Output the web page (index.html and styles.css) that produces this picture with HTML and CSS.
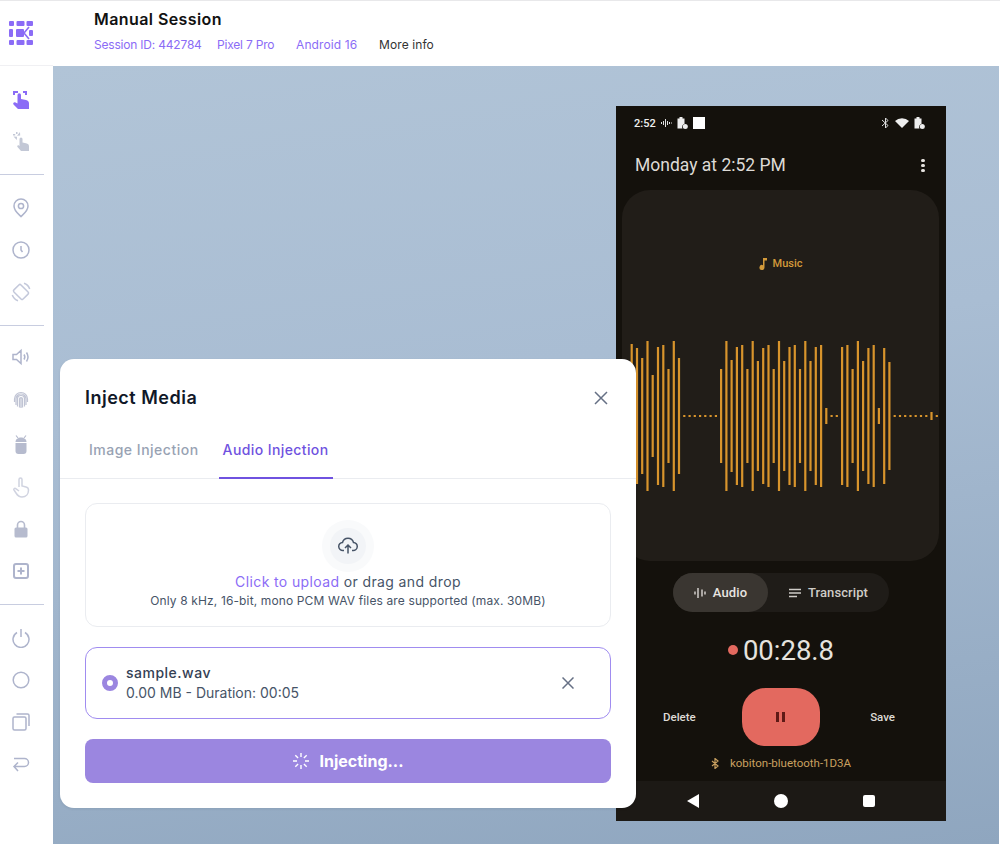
FILE: index.html
```html
<!DOCTYPE html>
<html lang="en">
<head>
    <meta charset="UTF-8">
    <meta name="viewport" content="width=device-width, initial-scale=1.0">
    <title>Manual Session</title>
    <link rel="stylesheet" href="styles.css">
</head>
<body>

    <div class="app">

        <!-- left tool rail -->
        <aside class="rail">
            <div class="rail-logo">
                <svg width="24" height="24" viewBox="0 0 24 24" fill="#8b6cf6">
                    <rect x="0" y="0" width="5" height="5" rx="1"/>
                    <rect x="7.5" y="0" width="8" height="5" rx="1"/>
                    <rect x="17.5" y="0" width="6.5" height="5" rx="1"/>
                    <rect x="0" y="8" width="4" height="8" rx="1"/>
                    <rect x="7" y="8" width="8" height="8" rx="1"/>
                    <path d="M15 12l5-6M15 12l5 6" stroke="#8b6cf6" stroke-width="1.6" fill="none"/>
                    <rect x="20" y="9" width="4" height="6" rx="1"/>
                    <rect x="0" y="19" width="5" height="5" rx="1"/>
                    <rect x="7.5" y="19" width="8" height="5" rx="1"/>
                    <rect x="17.5" y="19" width="6.5" height="5" rx="1"/>
                </svg>
            </div>

            <div class="rail-group">
                <div class="rail-btn">
                    <svg width="20" height="20" viewBox="0 0 20 20" fill="#8b6cf6">
                        <path d="M2 2h5v2H4v2H2zM12 2h4v4h-2V4h-2z"/>
                        <path d="M6.500 6a1.750 1.750 0 0 1 3.500 0v4l5 1c2 .5 3 1.500 3 3.500V20H7l-4.500-4.500c-1-1 .5-2.800 2-2l2 1z"/>
                    </svg>
                </div>
                <div class="rail-btn">
                    <svg width="20" height="20" viewBox="0 0 20 20" fill="#c3c8d6">
                        <path d="M2.500 5.500l3.500.2-.2 3.300zM9 1l.2 3.500-3.200.2z"/>
                        <path d="M2 3h2.200v1.500H2zM5 1h1.500v2H5z"/>
                        <path d="M8.500 8a1.500 1.500 0 0 1 3 0v3.500l3.500.7c2 .4 3 1.300 3 3.300V20H10l-3.500-4c-.8-1 .4-2.200 1.400-1.500l.6.4z"/>
                    </svg>
                </div>
            </div>

            <div class="rail-group">
                <div class="rail-btn">
                    <svg width="20" height="20" viewBox="0 0 20 20" class="rail-line">
                        <path d="M10 18.500c-1-1.300-7-5-7-10.500a7 7 0 0 1 14 0c0 5.500-6 9.200-7 10.500z"/>
                        <circle cx="10" cy="8" r="2.600"/>
                    </svg>
                </div>
                <div class="rail-btn">
                    <svg width="20" height="20" viewBox="0 0 20 20" class="rail-line">
                        <circle cx="10" cy="10" r="8"/>
                        <path d="M10 6v4l1.500 2"/>
                    </svg>
                </div>
                <div class="rail-btn">
                    <svg width="20" height="20" viewBox="0 0 20 20" class="rail-soft">
                        <rect x="5" y="3.500" width="10" height="13" rx="1.500" transform="rotate(-45 10 10)"/>
                        <path d="M13 1.300A9.200 9.200 0 0 1 18.700 7M7 18.700A9.200 9.200 0 0 1 1.300 13"/>
                    </svg>
                </div>
            </div>

            <div class="rail-group rail-group-mid">
                <div class="rail-btn">
                    <svg width="20" height="20" viewBox="0 0 20 20" class="rail-line">
                        <path d="M2 7.500h3.500L10 3.500v13l-4.500-4H2zM13 7.500c1 1.500 1 3.500 0 5M15.500 5.500c2 3 2 6 0 9"/>
                    </svg>
                </div>
                <div class="rail-btn">
                    <svg width="20" height="20" viewBox="0 0 20 20" class="rail-print">
                        <path d="M3.500 13v-3a6.500 6.500 0 0 1 13 0v3M5 16v-6a5 5 0 0 1 10 0v6M6.500 17.500V10a3.500 3.500 0 0 1 7 0v7.500M8.500 18.500V10a1.500 1.500 0 0 1 3 0v8.500M10 9v10"/>
                    </svg>
                </div>
                <div class="rail-btn rail-btn-android">
                    <svg width="20" height="22" viewBox="0 0 20 22" fill="#b6bbce">
                        <path d="M5 1.500l2 2.500M15 1.500L13 4" stroke="#b6bbce" stroke-width="1.200"/>
                        <path d="M4.500 8c0-6 11-6 11 0z"/>
                        <path d="M4.500 9h11v8c0 2-1 3-3 3h-5c-2 0-3-1-3-3z"/>
                    </svg>
                </div>
                <div class="rail-btn">
                    <svg width="20" height="22" viewBox="0 0 20 22" class="rail-faint">
                        <path d="M8 11V3.500c0-2 3-2 3 0V10l4 1c1.500.4 2.500 1 2.500 3 0 4-2.500 7-6.500 7-3 0-4.500-1.500-6-4l-2-3c-.8-1.200.8-2.400 1.800-1.400L8 15"/>
                    </svg>
                </div>
                <div class="rail-btn">
                    <svg width="20" height="20" viewBox="0 0 20 20" fill="#b6bbce">
                        <path d="M6.500 9V6a3.500 3.500 0 0 1 7 0v3" fill="none" stroke="#b6bbce" stroke-width="1.600"/>
                        <rect x="3.500" y="8.500" width="13" height="10" rx="1.500"/>
                    </svg>
                </div>
                <div class="rail-btn">
                    <svg width="20" height="20" viewBox="0 0 20 20" class="rail-line rail-thick">
                        <rect x="3" y="3" width="14" height="14" rx="2"/>
                        <path d="M10 6.500v7M6.500 10h7"/>
                    </svg>
                </div>
            </div>

            <div class="rail-group rail-group-last">
                <div class="rail-btn">
                    <svg width="20" height="20" viewBox="0 0 20 20" class="rail-line">
                        <path d="M6 4.500a8 8 0 1 0 8 0M10 1v8"/>
                    </svg>
                </div>
                <div class="rail-btn">
                    <svg width="20" height="20" viewBox="0 0 20 20" class="rail-line">
                        <circle cx="10" cy="10" r="7.800"/>
                    </svg>
                </div>
                <div class="rail-btn">
                    <svg width="20" height="20" viewBox="0 0 20 20" class="rail-line">
                        <rect x="2" y="5" width="13" height="13" rx="1.500"/>
                        <path d="M5.500 2h11a1.500 1.500 0 0 1 1.500 1.500V14"/>
                    </svg>
                </div>
                <div class="rail-btn">
                    <svg width="20" height="20" viewBox="0 0 20 20" class="rail-line">
                        <path d="M3 3h10.500a3.800 3.800 0 0 1 0 8H3M7 7l-4 4 4 4.500" transform="translate(0 1.500)"/>
                    </svg>
                </div>
            </div>
        </aside>

        <div class="main">

            <header class="topbar">
                <div class="topbar-title">Manual Session</div>
                <div class="topbar-meta">
                    <span class="meta-link meta-id">Session ID: 442784</span>
                    <span class="meta-link meta-model">Pixel 7 Pro</span>
                    <span class="meta-link meta-os">Android 16</span>
                    <span class="meta-more">More info</span>
                </div>
            </header>

            <div class="stage">

                <!-- device screen -->
                <div class="phone">
                    <div class="phone-status">
                        <div class="status-left">
                            <span>2:52</span>
                            <svg width="11" height="10" viewBox="0 0 11 10" class="status-stroke">
                                <path d="M.5 4v2M2.500 3v4M4.500 1v8M6.500 3v4M8.500 4v2M10.500 4.500v1"/>
                            </svg>
                            <svg width="11" height="12" viewBox="0 0 11 12" fill="#eee">
                                <path d="M2.500 0h3v1.500h2V7a3 3 0 0 0-2 4.500H.5v-10h2z"/>
                                <circle cx="8.300" cy="9.500" r="2.500"/>
                            </svg>
                            <span class="status-square"></span>
                        </div>
                        <div class="status-right">
                            <svg width="9" height="12" viewBox="0 0 9 12" class="status-stroke">
                                <path d="M1 3l6 5.500L4.500 11V1L7 3.500 1 9"/>
                            </svg>
                            <svg width="14" height="10" viewBox="0 0 14 10" fill="#eee">
                                <path d="M0 3a10 10 0 0 1 14 0l-7 7z"/>
                            </svg>
                            <svg width="11" height="12" viewBox="0 0 11 12" fill="#eee">
                                <path d="M2.500 0h3v1.500h2V7a3 3 0 0 0-2 4.500H.5v-10h2z"/>
                                <circle cx="8.300" cy="9.500" r="2.500"/>
                            </svg>
                        </div>
                    </div>

                    <div class="phone-head">
                        <span>Monday at 2:52 PM</span>
                        <span class="dots"><i></i><i></i><i></i></span>
                    </div>

                    <div class="wave-card">
                        <div class="wave-tag">
                            <svg width="8" height="12" viewBox="0 0 8 12" fill="#d39a3a">
                                <path d="M4 0h4v2.500H5.500v7A2.500 2.500 0 1 1 4 7.200z"/>
                            </svg>
                            <span>Music</span>
                        </div>
                        <svg class="wave" width="317" height="160" viewBox="0 0 317 160">
                            <path d="M9.700 8v144M15 12v136M20.200 22v116M25.500 5v150M30.700 39v82M36 11v138M41.300 9v142M46.500 33v94M51.800 5v150M57 22v116
                            M62.300 79v2M67.600 79v2M72.800 79v2M78.100 79v2M83.300 79v2M88.600 79v2M93.900 79v2
                            M99.100 33v94M104.400 5v150M109.600 24v112M114.900 11v138M120.200 9v142M125.400 33v94M130.700 5v150M135.900 25v110M141.200 12v136M146.500 9v142
                            M151.700 33v94M157 5v150M162.200 25v110M167.500 11v138M172.800 9v142M178 33v94M183.300 5v150M188.500 25v110M193.800 11v138M199.100 9v142
                            M204.300 72v16M209.600 79v2M214.800 79v2
                            M220.100 11v138M225.400 9v142M230.600 33v94M235.900 5v150M241.100 25v110M246.400 12v136M251.700 9v142M256.900 72v16M262.200 12v136M267.400 26v108
                            M272.700 79v2M278 79v2M283.200 79v2M288.500 79v2M293.700 79v2M299 79v2M304.300 79v2M309.500 76v8M314.800 79v2"/>
                        </svg>
                    </div>

                    <div class="segment">
                        <div class="segment-item segment-on">
                            <svg width="12" height="12" viewBox="0 0 12 12" class="seg-icon">
                                <path d="M1 4.500v3M4 1v10M8 2.500v7M11 4.500v3"/>
                            </svg>
                            <span>Audio</span>
                        </div>
                        <div class="segment-item">
                            <svg width="12" height="10" viewBox="0 0 12 10" class="seg-icon">
                                <path d="M0 1.500h12M0 5h12M0 8.500h8"/>
                            </svg>
                            <span>Transcript</span>
                        </div>
                    </div>

                    <div class="timer">
                        <span class="timer-dot"></span>
                        <span>00:28.8</span>
                    </div>

                    <div class="controls">
                        <span class="ctrl-text">Delete</span>
                        <div class="pause-btn"><i></i><i></i></div>
                        <span class="ctrl-text">Save</span>
                    </div>

                    <div class="device-row">
                        <svg width="8" height="11" viewBox="0 0 8 11" class="bt-icon">
                            <path d="M1 3l6 5-3 2.500V.500L7 3 1 8"/>
                        </svg>
                        <span>kobiton-bluetooth-1D3A</span>
                    </div>

                    <div class="phone-nav">
                        <span class="nav-back"></span>
                        <span class="nav-home"></span>
                        <span class="nav-recent"></span>
                    </div>
                </div>

                <!-- modal over the stage -->
                <div class="modal">
                    <div class="modal-head">
                        <div class="modal-title">Inject Media</div>
                        <svg width="14" height="14" viewBox="0 0 14 14" class="x-icon">
                            <path d="M1 1l12 12M13 1L1 13"/>
                        </svg>
                    </div>

                    <div class="tabs">
                        <div class="tab">Image Injection</div>
                        <div class="tab tab-active">Audio Injection</div>
                    </div>

                    <div class="modal-body">
                        <div class="upload">
                            <div class="upload-ring">
                                <div class="upload-circle">
                                    <svg width="20" height="20" viewBox="0 0 20 20" class="upload-icon">
                                        <path d="M6 14.500H5a4 4 0 0 1-.5-8 5.700 5.700 0 0 1 11 0 4 4 0 0 1-.5 8h-1M10 17.500v-8M7 12l3-3 3 3"/>
                                    </svg>
                                </div>
                            </div>
                            <div class="upload-text"><span class="upload-link">Click to upload</span> or drag and drop</div>
                            <div class="upload-note">Only 8 kHz, 16-bit, mono PCM WAV files are supported (max. 30MB)</div>
                        </div>

                        <div class="file-card">
                            <span class="radio"></span>
                            <div class="file-info">
                                <div class="file-name">sample.wav</div>
                                <div class="file-meta">0.00 MB - Duration: 00:05</div>
                            </div>
                            <svg width="12" height="12" viewBox="0 0 12 12" class="x-icon">
                                <path d="M.5.500l11 11M11.500.500l-11 11"/>
                            </svg>
                        </div>

                        <div class="inject-btn">
                            <svg width="18" height="18" viewBox="0 0 18 18" class="spinner">
                                <path d="M9 1v4M9 13v4M1 9h4M13 9h4M3.300 3.300l2.800 2.800M11.900 11.900l2.800 2.800M3.300 14.700l2.800-2.800M11.900 6.100l2.800-2.800"/>
                            </svg>
                            <span>Injecting...</span>
                        </div>
                    </div>
                </div>

            </div>
        </div>
    </div>

</body>
</html>
```

FILE: styles.css
```css
:root{
    --purple: #8b6cf6;
    --purple-deep: #6f52e0;
    --purple-soft: #9b86e0;
    --rail-ink: #aeb4cc;
    --line: #eaecf0;
}
*{
    box-sizing: border-box;
}
body{
    margin: 0;
    background: #fff;
    font-family: "Inter", sans-serif;
}
.app{
    display: flex;
    width: 1000px;
    height: 845px;
    border-top: 1px solid #e8e8ea;
    overflow: hidden;
}

/* rail */
.rail{
    width: 53px;
    flex: none;
    background: #fff;
}
.rail-logo{
    height: 65px;
    padding: 20px 0 0 9px;
    border-bottom: 1px solid #f0f0f3;
    width: 53px;
}
.rail-logo svg{
    display: block;
}
.rail-group{
    width: 44px;
    padding: 12px 0;
    border-bottom: 1px solid #c8cde0;
}
.rail-group-mid{
    padding-top: 10px;
}
.rail-group-last{
    border-bottom: 0;
}
.rail-btn{
    height: 42px;
    display: flex;
    align-items: center;
    justify-content: center;
    width: 42px;
}
.rail-btn-android{
    margin-top: 4px;
}
.rail-line{
    fill: none;
    stroke: var(--rail-ink);
    stroke-width: 1.5;
}
.rail-soft{
    fill: none;
    stroke: #c3c8da;
    stroke-width: 1.5;
}
.rail-thick{
    stroke-width: 2;
}
.rail-print{
    fill: none;
    stroke: #c0c4d4;
    stroke-width: 1.2;
}
.rail-faint{
    fill: none;
    stroke: #d0d3e0;
    stroke-width: 1.5;
}

/* top */
.main{
    flex: 1;
    display: flex;
    flex-direction: column;
    min-width: 0;
}
.topbar{
    height: 65px;
    flex: none;
    padding: 8px 0 0 41px;
    background: #fff;
}
.topbar-title{
    font-size: 16px;
    line-height: 21px;
    font-weight: 600;
    color: #111;
    letter-spacing: .42px;
}
.topbar-meta{
    display: flex;
    margin-top: 7px;
    font-size: 12px;
    line-height: 16px;
}
.meta-link{
    color: var(--purple);
}
.meta-id{
    width: 123px;
    letter-spacing: -.2px;
}
.meta-model{
    width: 79px;
    letter-spacing: -.2px;
}
.meta-os{
    width: 83px;
    letter-spacing: .1px;
}
.meta-more{
    color: #333;
    letter-spacing: .1px;
}

/* stage */
.stage{
    position: relative;
    flex: none;
    height: 778px;
    width: 946px;
    padding: 40px 53px 0 0;
    display: flex;
    justify-content: flex-end;
    align-items: flex-start;
    background: linear-gradient(172deg, #b1c4d7 0%, #a9bdd3 40%, #8fa6bf 100%);
}

/* phone */
.phone{
    width: 330px;
    height: 715px;
    background: #14110c;
    display: flex;
    flex-direction: column;
    font-family: "Roboto", sans-serif;
    color: #e6e3df;
}
.phone-status{
    height: 34px;
    padding: 0 21px 0 18px;
    display: flex;
    align-items: center;
    justify-content: space-between;
    font-size: 11px;
    font-weight: 500;
    color: #eee;
}
.status-left, .status-right{
    display: flex;
    align-items: center;
    gap: 5px;
}
.status-square{
    width: 12px;
    height: 12px;
    background: #fff;
}
.status-stroke{
    fill: none;
    stroke: #ddd;
    stroke-width: 1;
}
.phone-head{
    height: 50px;
    padding: 0 21px 0 19px;
    display: flex;
    align-items: center;
    justify-content: space-between;
    font-size: 17.5px;
    color: #dedbd6;
}
.dots{
    display: flex;
    flex-direction: column;
    gap: 2px;
}
.dots i{
    width: 4px;
    height: 3px;
    border-radius: 2px;
    background: #e6e3df;
}
.wave-card{
    margin: 0 7px 0 6px;
    height: 371px;
    flex: none;
    border-radius: 28px;
    background: #211d18;
    padding-top: 66px;
}
.wave-tag{
    display: flex;
    align-items: center;
    justify-content: center;
    gap: 6px;
    font-size: 11px;
    line-height: 16px;
    font-weight: 500;
    color: #d39a3a;
}
.wave{
    display: block;
    margin-top: 64px;
    fill: none;
    stroke: #d8942c;
    stroke-width: 2.2;
}
.segment{
    display: flex;
    width: 216px;
    height: 39px;
    margin: 12px auto 0;
    border-radius: 20px;
    background: #1f1c18;
    font-size: 13px;
    font-weight: 500;
    letter-spacing: .1px;
    color: #cfccc7;
}
.segment-item{
    flex: 1;
    display: flex;
    align-items: center;
    justify-content: center;
    gap: 7px;
    border-radius: 20px;
}
.segment-item:last-child{
    flex: none;
    width: 121px;
}
.segment-on{
    background: #3a3631;
    color: #e8e5e0;
}
.seg-icon{
    fill: none;
    stroke: currentColor;
    stroke-width: 1.3;
}
.timer{
    display: flex;
    align-items: center;
    justify-content: center;
    gap: 5px;
    height: 38px;
    margin-top: 19px;
    font-size: 27.5px;
    color: #e6e3df;
}
.timer-dot{
    width: 10px;
    height: 10px;
    border-radius: 50%;
    background: #e3695f;
}
.controls{
    display: flex;
    align-items: center;
    justify-content: space-between;
    margin-top: 19px;
    padding: 0 51px 0 47px;
    font-size: 11.5px;
    font-weight: 500;
    color: #dedbd6;
}
.pause-btn{
    width: 78px;
    height: 58px;
    border-radius: 24px;
    background: #e3695f;
    display: flex;
    align-items: center;
    justify-content: center;
    gap: 3px;
    margin-right: 4px;
}
.pause-btn i{
    width: 3px;
    height: 10px;
    background: #5e1a16;
}
.device-row{
    display: flex;
    align-items: center;
    justify-content: center;
    gap: 11px;
    height: 20px;
    margin-top: 7px;
    font-size: 11.5px;
    color: #c9a060;
}
.bt-icon{
    fill: none;
    stroke: #c9a060;
    stroke-width: 1.2;
}
.phone-nav{
    margin-top: auto;
    height: 40px;
    background: #1c1915;
    display: flex;
    align-items: center;
    justify-content: center;
}
.phone-nav span{
    display: block;
}
.nav-back{
    width: 0;
    height: 0;
    border-top: 7px solid transparent;
    border-bottom: 7px solid transparent;
    border-right: 12px solid #fff;
}
.nav-home{
    width: 14px;
    height: 14px;
    margin: 0 75px;
    border-radius: 50%;
    background: #fff;
}
.nav-recent{
    width: 12px;
    height: 12px;
    border-radius: 2px;
    background: #fff;
}

/* modal */
.modal{
    position: absolute;
    left: 7px;
    top: 293px;
    width: 576px;
    height: 449px;
    background: #fff;
    border-radius: 14px;
    box-shadow: 0 1px 3px rgba(16, 24, 40, .08);
}
.modal-head{
    display: flex;
    align-items: center;
    justify-content: space-between;
    padding: 26px 28px 0 25px;
}
.modal-title{
    font-size: 18px;
    line-height: 26px;
    font-weight: 600;
    letter-spacing: .5px;
    color: #101828;
}
.x-icon{
    fill: none;
    stroke: #667085;
    stroke-width: 1.5;
}
.tabs{
    display: flex;
    margin-top: 26px;
    padding-left: 25px;
    gap: 16px;
    height: 42px;
    border-bottom: 1px solid var(--line);
    font-size: 14px;
    font-weight: 500;
    letter-spacing: .5px;
    color: #98a2b3;
}
.tab{
    padding: 0 4px;
    line-height: 26px;
    height: 42px;
}
.tab-active{
    color: var(--purple-deep);
    letter-spacing: .4px;
    border-bottom: 2px solid var(--purple-deep);
}
.modal-body{
    padding: 24px 25px 0;
}
.upload{
    height: 124px;
    border: 1px solid var(--line);
    border-radius: 12px;
    display: flex;
    flex-direction: column;
    align-items: center;
    padding-top: 16px;
}
.upload-ring{
    width: 52px;
    height: 52px;
    border-radius: 50%;
    background: #f9fafb;
    padding: 8px;
}
.upload-circle{
    width: 36px;
    height: 36px;
    border-radius: 50%;
    background: #f2f4f7;
    display: flex;
    align-items: center;
    justify-content: center;
}
.upload-icon{
    fill: none;
    stroke: #475467;
    stroke-width: 1.5;
}
.upload-text{
    font-size: 14px;
    line-height: 20px;
    letter-spacing: .38px;
    color: #475467;
}
.upload-link{
    color: var(--purple);
}
.upload-note{
    font-size: 12px;
    line-height: 18px;
    letter-spacing: .13px;
    color: #475467;
}
.file-card{
    display: flex;
    align-items: center;
    height: 72px;
    margin-top: 20px;
    padding: 0 36px 0 16px;
    border: 1px solid #a08cf0;
    border-radius: 12px;
}
.radio{
    width: 16px;
    height: 16px;
    border-radius: 50%;
    border: 5px solid var(--purple-soft);
    background: #fff;
    flex: none;
}
.file-info{
    flex: 1;
    margin-left: 8px;
    font-size: 14px;
    line-height: 20px;
}
.file-name{
    font-weight: 500;
    letter-spacing: .5px;
    color: #344054;
}
.file-meta{
    color: #475467;
}
.inject-btn{
    display: flex;
    align-items: center;
    justify-content: center;
    gap: 9px;
    height: 44px;
    margin-top: 20px;
    border-radius: 8px;
    background: var(--purple-soft);
    font-size: 16px;
    font-weight: 700;
    color: #fff;
}
.spinner{
    fill: none;
    stroke: #fff;
    stroke-width: 1.4;
}
```
